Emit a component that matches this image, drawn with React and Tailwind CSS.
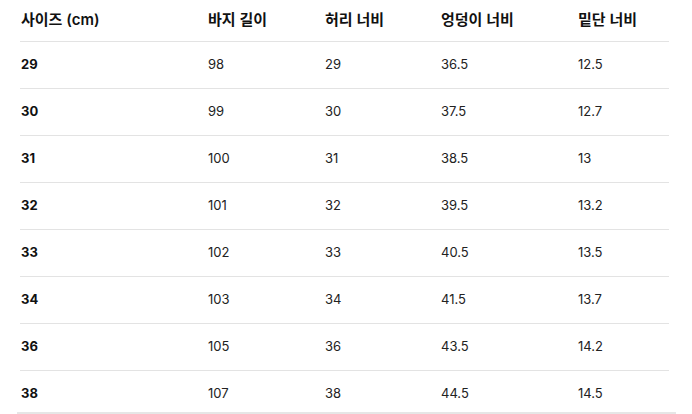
import React from 'react';

const cols = ['사이즈 (cm)', '바지 길이', '허리 너비', '엉덩이 너비', '밑단 너비'];
const rows = [
  ['29', '98', '29', '36.5', '12.5'],
  ['30', '99', '30', '37.5', '12.7'],
  ['31', '100', '31', '38.5', '13'],
  ['32', '101', '32', '39.5', '13.2'],
  ['33', '102', '33', '40.5', '13.5'],
  ['34', '103', '34', '41.5', '13.7'],
  ['36', '105', '36', '43.5', '14.2'],
  ['38', '107', '38', '44.5', '14.5'],
];

const grid = 'grid grid-cols-[187px_117px_116px_137px_1fr] items-center';

export default function App(){
  return (
    <div className="w-[692px] h-[414px] overflow-hidden bg-white text-[#222] [font-family:Inter,'Noto_Sans_CJK_KR',sans-serif]">
      <div className="ml-[20px] w-[649px]">
        <div className={`${grid} h-[42px] border-b border-[#e3e3e3] text-[15px] font-semibold text-[#111]`}>
          {cols.map((c)=> <div key={c} className="pl-[1px]">{c}</div>)}
        </div>
        {rows.map((r, i)=> {
          const last = i === rows.length-1;
          return (
            <div key={r[0]} className={`${grid} text-[13px] ${last ? 'h-[41px] pt-[4px]' : 'h-[47px] border-b border-[#e3e3e3]'}`}>
              {r.map((v, j)=> (
                <div key={j} className={`pl-[1px] ${j===0 ? 'font-bold text-[#111]' : ''}`}>{v}</div>
              ))}
            </div>
          );
        })}
      </div>
      <div className="ml-[17px] w-[659px] h-[2px] bg-[#e6e6e6]"></div>
    </div>
  );
}
